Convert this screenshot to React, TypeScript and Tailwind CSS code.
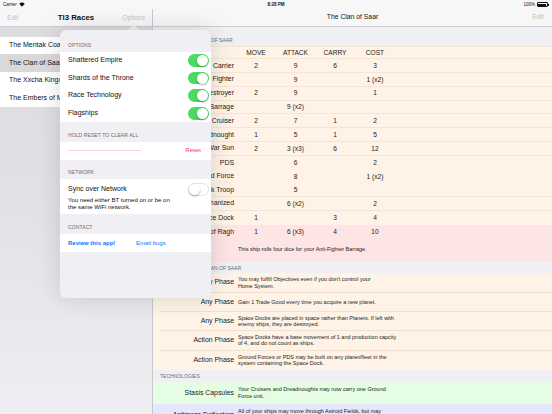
import React from "react";

type Unit = { name: string; move: string; attack: string; carry: string; cost: string; line?: boolean };

const units: Unit[] = [
    { name: "Carrier", move: "2", attack: "9", carry: "6", cost: "3", line: true },
    { name: "Fighter", move: "", attack: "9", carry: "", cost: "1 (x2)", line: true },
    { name: "Destroyer", move: "2", attack: "9", carry: "", cost: "1", line: true },
    { name: "Anti-Fighter Barrage", move: "", attack: "9 (x2)", carry: "", cost: "", line: true },
    { name: "Cruiser", move: "2", attack: "7", carry: "1", cost: "2", line: true },
    { name: "Dreadnought", move: "1", attack: "5", carry: "1", cost: "5", line: true },
    { name: "War Sun", move: "2", attack: "3 (x3)", carry: "6", cost: "12", line: true },
    { name: "PDS", move: "", attack: "6", carry: "", cost: "2" },
    { name: "Ground Force", move: "", attack: "8", carry: "", cost: "1 (x2)" },
    { name: "Shock Troop", move: "", attack: "5", carry: "", cost: "", line: true },
    { name: "Mechanized", move: "", attack: "6 (x2)", carry: "", cost: "2", line: true },
    { name: "Space Dock", move: "1", attack: "", carry: "3", cost: "4" },
];

const abilities: { phase: string; lines: string[] }[] = [
    { phase: "Any Phase", lines: ["You may fulfill Objectives even if you don't control your", "Home System."] },
    { phase: "Any Phase", lines: ["Gain 1 Trade Good every time you acquire a new planet."] },
    { phase: "Any Phase", lines: ["Space Docks are placed in space rather than Planets. If left with", "enemy ships, they are destroyed."] },
    { phase: "Action Phase", lines: ["Space Docks have a base movement of 1 and production capcity", "of 4, and do not count as ships."] },
    { phase: "Action Phase", lines: ["Ground Forces or PDS may be built on any planet/fleet in the", "system containing the Space Dock."] },
];

const races = ["The Mentak Coalition", "The Clan of Saar", "The Xxcha Kingdom", "The Embers of Muaat"];

const Toggle = ({ on }: { on: boolean }) =>
    on ? (
        <div className="w-[21px] h-[12.5px] rounded-full bg-[#4cd964] flex items-center justify-end p-[0.8px]">
            <div className="w-[11px] h-[11px] rounded-full bg-white shadow-[0_1px_2px_rgba(0,0,0,0.3)]" />
        </div>
    ) : (
        <div className="w-[21px] h-[12.5px] rounded-full bg-white border border-[#e3e3e8] flex items-center justify-start p-[0.3px]">
            <div className="w-[11px] h-[11px] rounded-full bg-white shadow-[0_1px_2px_rgba(0,0,0,0.35)]" />
        </div>
    );

const PopHeader = ({ children, h }: { children: React.ReactNode; h: string }) => (
    <div className={`${h} flex items-end pl-[8px] pb-[4px] text-[5px] leading-[6px] text-[#6d6d72] tracking-[0.1px]`}>
        {children}
    </div>
);

const Cell = ({ children }: { children: React.ReactNode }) => (
    <div className="flex items-center justify-center">{children}</div>
);

export default function App() {
    return (
        <div className="w-[552px] h-[414px] relative overflow-hidden bg-white text-[#111] antialiased font-['Liberation_Sans',Arial,sans-serif]">
            {/* status bar */}
            <div className="h-[9px] bg-[#f7f7f7] flex items-center justify-between px-[3px] text-[4.5px] leading-[5px]">
                <div className="flex items-center gap-[2px] w-[60px]">
                    <span>Carrier</span>
                    <svg width="6" height="5" viewBox="0 0 12 9">
                        <path d="M6 9 L0.5 3 A8 8 0 0 1 11.5 3 Z" fill="#111" />
                    </svg>
                </div>
                <span className="font-bold">8:28 PM</span>
                <div className="flex items-center justify-end gap-[2px] w-[60px]">
                    <span>100%</span>
                    <div className="flex items-center">
                        <div className="w-[11px] h-[5px] border-[0.5px] border-[#111] rounded-[1px] p-[0.5px]">
                            <div className="w-full h-full bg-[#111]" />
                        </div>
                        <div className="w-[1px] h-[2px] bg-[#111]" />
                    </div>
                </div>
            </div>

            <div className="flex h-[405px]">
                {/* master */}
                <div className="w-[152px] flex flex-col">
                    <div className="h-[18px] bg-[#f7f7f7] border-b border-[#cfcfd3] flex items-center justify-between px-[7px] text-[6.6px]">
                        <span className="text-[#c2c2c7] w-[30px]">Edit</span>
                        <span className="font-bold text-[7.8px] text-[#111]">TI3 Races</span>
                        <span className="text-[#c2c2c7] w-[30px] text-right">Options</span>
                    </div>
                    <div className="flex-1 bg-[linear-gradient(180deg,#dcdce0_0%,#e2e2e6_45%,#efeff3_100%)] pt-[9.5px]">
                        {races.map((r, i) => (
                            <div
                                key={r}
                                className={`h-[17.5px] flex items-center pl-[9px] text-[7px] whitespace-nowrap overflow-hidden ${
                                    i === 1 ? "bg-[#d9d9dc]" : "bg-white"
                                }`}
                            >
                                {r}
                            </div>
                        ))}
                    </div>
                </div>

                <div className="w-px bg-[#c8c7cc]" />

                {/* detail */}
                <div className="flex-1 flex flex-col">
                    <div className="h-[18px] bg-[#f7f7f7] border-b border-[#cfcfd3] flex items-center justify-between px-[8px] text-[6.8px]">
                        <span className="w-[30px]" />
                        <span className="text-[#111]">The Clan of Saar</span>
                        <span className="text-[#c2c2c7] w-[30px] text-right">Edit</span>
                    </div>
                    <div className="flex-1 overflow-hidden bg-[#efeff4]">
                        <div className="h-[19px] flex items-end pl-[7px] pb-[3.5px] text-[5px] leading-[6px] text-[#6d6d72]">
                            UNITS OF THE CLAN OF SAAR
                        </div>
                        <div className="bg-[#fef3e6] text-[6.6px] text-[#222]">
                            <div className="h-[13.3px] grid grid-cols-[83px_40px_39px_40px_40px] border-t border-b border-[#f4e6d6]">
                                <div />
                                <Cell>MOVE</Cell>
                                <Cell>ATTACK</Cell>
                                <Cell>CARRY</Cell>
                                <Cell>COST</Cell>
                            </div>
                            {units.map((u) => (
                                <div
                                    key={u.name}
                                    className={`h-[13.8px] grid grid-cols-[83px_40px_39px_40px_40px] ${
                                        u.line ? "border-b border-[#f4e6d6]" : ""
                                    }`}
                                >
                                    <div className="flex items-center justify-end pr-[2px] text-[6.9px] whitespace-nowrap">{u.name}</div>
                                    <Cell>{u.move}</Cell>
                                    <Cell>{u.attack}</Cell>
                                    <Cell>{u.carry}</Cell>
                                    <Cell>{u.cost}</Cell>
                                </div>
                            ))}
                        </div>
                        <div className="bg-[#fee4e4] text-[6.6px] text-[#222] h-[37px]">
                            <div className="h-[14.5px] grid grid-cols-[83px_40px_39px_40px_40px]">
                                <div className="flex items-center justify-end pr-[2px] text-[6.9px]">Son of Ragh</div>
                                <Cell>1</Cell>
                                <Cell>6 (x3)</Cell>
                                <Cell>4</Cell>
                                <Cell>10</Cell>
                            </div>
                            <div className="pl-[85px] pt-[7px] text-[5.5px] leading-[6px]">
                                This ship rolls four dice for your Anti-Fighter Barrage.
                            </div>
                        </div>
                        <div className="h-[11.5px] flex items-end pl-[7px] pb-[2.5px] text-[5px] leading-[6px] text-[#6d6d72]">
                            ABILITIES OF THE CLAN OF SAAR
                        </div>
                        <div className="bg-[#fef3e6] text-[#222]">
                            {abilities.map((a, i) => (
                                <div
                                    key={i}
                                    className={`h-[19.3px] ml-[7px] flex items-center ${
                                        i < abilities.length - 1 ? "border-b border-[#f0e2d1]" : ""
                                    }`}
                                >
                                    <div className="w-[76px] text-right pr-[2px] text-[6.9px] whitespace-nowrap">{a.phase}</div>
                                    <div className="pl-[2px] text-[5.5px] leading-[6.3px] whitespace-nowrap">
                                        {a.lines.map((l) => (
                                            <div key={l}>{l}</div>
                                        ))}
                                    </div>
                                </div>
                            ))}
                        </div>
                        <div className="h-[12.4px] flex items-end pl-[7px] pb-[3px] text-[5px] leading-[6px] text-[#6d6d72]">
                            TECHNOLOGIES
                        </div>
                        <div className="bg-[#e5fee3] h-[21.6px] ml-0 flex items-center text-[#222]">
                            <div className="w-[83px] text-right pr-[2px] text-[6.9px] whitespace-nowrap">Stasis Capsules</div>
                            <div className="pl-[2px] text-[5.5px] leading-[6.6px] whitespace-nowrap">
                                <div>Your Cruisers and Dreadnoughts may now carry one Ground</div>
                                <div>Force unit.</div>
                            </div>
                        </div>
                        <div className="bg-[#e6e6fd] h-[22px] flex items-center text-[#222]">
                            <div className="w-[83px] text-right pr-[2px] text-[6.9px] whitespace-nowrap">Antimass Deflectors</div>
                            <div className="pl-[2px] text-[5.5px] leading-[6.6px] whitespace-nowrap">
                                <div>All of your ships may move through Astroid Fields, but may</div>
                                <div>not end their movement there.</div>
                            </div>
                        </div>
                    </div>
                </div>
            </div>

            {/* popover arrow */}
            <svg className="absolute left-[127px] top-[24.5px]" width="14" height="6" viewBox="0 0 14 6">
                <path d="M0 6 L7 0 L14 6 Z" fill="#efeff4" />
            </svg>

            {/* popover */}
            <div className="absolute left-[60px] top-[30px] w-[151px] h-[268px] rounded-[6px] bg-[#efeff4] overflow-hidden shadow-[0_0_24px_rgba(0,0,0,0.14)]">
                <PopHeader h="h-[21.5px]">OPTIONS</PopHeader>
                <div className="bg-white">
                    {["Shattered Empire", "Shards of the Throne", "Race Technology", "Flagships"].map((o) => (
                        <div key={o} className="h-[17.7px] flex items-center justify-between pl-[8px] pr-[2.5px] text-[7px]">
                            <span>{o}</span>
                            <Toggle on />
                        </div>
                    ))}
                </div>
                <PopHeader h="h-[19.5px]">HOLD RESET TO CLEAR ALL</PopHeader>
                <div className="bg-white h-[18px] flex items-center justify-between pl-[8px] pr-[10px]">
                    <div className="w-[73px] h-px bg-[#fbd3da]" />
                    <span className="text-[6px] text-[#ff3b30]">Reset</span>
                </div>
                <PopHeader h="h-[19.5px]">NETWORK</PopHeader>
                <div className="bg-white h-[35px] pl-[8px] pr-[2.5px] pt-[4px]">
                    <div className="flex items-center justify-between h-[12px]">
                        <span className="text-[7px]">Sync over Network</span>
                        <Toggle on={false} />
                    </div>
                    <div className="text-[6px] leading-[7px] mt-[2px]">
                        You need either BT turned on or be on
                        <br />
                        the same WiFi network.
                    </div>
                </div>
                <PopHeader h="h-[20px]">CONTACT</PopHeader>
                <div className="bg-white h-[18px] flex items-center pl-[8px] text-[6px] text-[#007aff]">
                    <span className="font-bold w-[68px]">Review this app!</span>
                    <span>Email bugs</span>
                </div>
            </div>
        </div>
    );
}
